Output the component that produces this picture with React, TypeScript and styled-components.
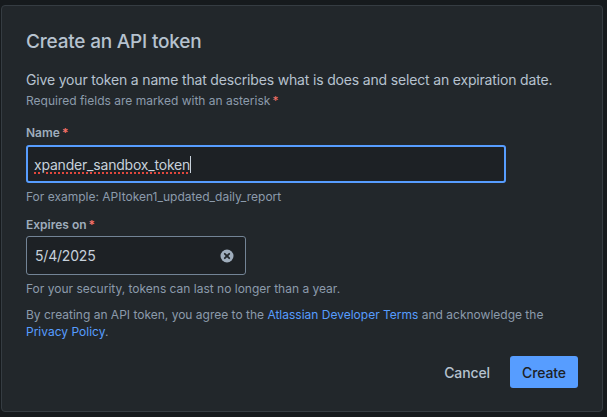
import React from "react";
import styled, { createGlobalStyle } from "styled-components";

const Global = createGlobalStyle`
  html, body { margin: 0; padding: 0; background: #161a1d; }
  body { font-family: Inter, "Noto Sans", "Liberation Sans", sans-serif; -webkit-font-smoothing: antialiased; }
  * { box-sizing: border-box; }
`;

const Page = styled.div`
  width: 607px;
  height: 417px;
  padding: 5px 4px 5px 1px;
  background: #161a1d;
`;

const Modal = styled.div`
  height: 407px;
  background: #22272b;
  border: 1px solid #353c42;
  border-radius: 4px;
  padding: 24px 24px 0 24px;
  display: flex;
  flex-direction: column;
  color: #b6c2cf;
  & > * { flex-shrink: 0; }
`;

const Title = styled.h1`
  margin: 0;
  font-size: 19px;
  line-height: 24px;
  font-weight: 500;
  letter-spacing: -0.2px;
  color: #b6c2cf;
`;

const Desc = styled.p`
  margin: 16px 0 0 0;
  font-size: 14px;
  line-height: 20px;
  letter-spacing: -0.17px;
  color: #b6c2cf;
`;

const Small = styled.p<{ $mt?: number }>`
  margin: ${(p) => p.$mt ?? 0}px 0 0 0;
  font-size: 12px;
  line-height: 16px;
  color: #8c9bab;
`;

const Star = styled.span`
  color: #f87168;
  margin-left: 2px;
`;

const Label = styled.label<{ $mt: number }>`
  display: block;
  margin-top: ${(p) => p.$mt}px;
  font-size: 12px;
  line-height: 16px;
  font-weight: 600;
  color: #9fadbc;
`;

const TextBox = styled.div<{ $w: number; $h: number; $mt: number; $focused?: boolean }>`
  margin-top: ${(p) => p.$mt}px;
  width: ${(p) => p.$w}px;
  height: ${(p) => p.$h}px;
  border-radius: 3px;
  border: ${(p) => (p.$focused ? "2px solid #579dff" : "1px solid #738496")};
  background: #1d2125;
  display: flex;
  align-items: center;
  padding: 0 ${(p) => (p.$focused ? 6 : 8)}px;
  font-size: 14px;
  letter-spacing: -0.2px;
  color: #c7d1db;
`;

const Typed = styled.span`
  text-decoration: underline dotted #e2483d;
  text-decoration-thickness: 2px;
  text-underline-offset: 3px;
`;

const Caret = styled.span`
  display: inline-block;
  width: 1px;
  height: 17px;
  background: #c7d1db;
`;

const ClearIcon = styled.svg`
  margin-left: auto;
  margin-right: 3px;
`;

const Link = styled.a`
  color: #579dff;
  text-decoration: none;
`;

const Legal = styled.p`
  margin: 9px 0 0 0;
  font-size: 12px;
  line-height: 17px;
  color: #8c9bab;
`;

const Footer = styled.div`
  display: flex;
  justify-content: flex-end;
  align-items: center;
  gap: 8px;
  margin-top: 16px;
`;

const Button = styled.button<{ $primary?: boolean }>`
  font-family: inherit;
  font-size: 14px;
  font-weight: 500;
  letter-spacing: -0.1px;
  height: 32px;
  padding: 0 12px;
  border: none;
  border-radius: 3px;
  background: ${(p) => (p.$primary ? "#579dff" : "transparent")};
  color: ${(p) => (p.$primary ? "#1d2125" : "#b6c2cf")};
`;

export default function App() {
  return (
    <Page>
      <Global />
      <Modal>
        <Title>Create an API token</Title>
        <Desc>Give your token a name that describes what is does and select an expiration date.</Desc>
        <Small $mt={3}>
          Required fields are marked with an asterisk<Star>*</Star>
        </Small>
        <Label $mt={16}>
          Name<Star>*</Star>
        </Label>
        <TextBox $w={480} $h={38} $mt={4} $focused>
          <Typed>xpander_sandbox_token</Typed>
          <Caret />
        </TextBox>
        <Small $mt={6}>For example: APItoken1_updated_daily_report</Small>
        <Label $mt={12}>
          Expires on<Star>*</Star>
        </Label>
        <TextBox $w={220} $h={39} $mt={3}>
          <span>5/4/2025</span>
          <ClearIcon width="14" height="14" viewBox="0 0 14 14">
            <circle cx="7" cy="7" r="6.5" fill="#9fadbc" />
            <path d="M4.8 4.8 L9.2 9.2 M9.2 4.8 L4.8 9.2" stroke="#22272b" strokeWidth="1.8" strokeLinecap="round" />
          </ClearIcon>
        </TextBox>
        <Small $mt={6}>For your security, tokens can last no longer than a year.</Small>
        <Legal>
          By creating an API token, you agree to the <Link>Atlassian Developer Terms</Link> and acknowledge the{" "}
          <Link>Privacy Policy</Link>.
        </Legal>
        <Footer>
          <Button>Cancel</Button>
          <Button $primary>Create</Button>
        </Footer>
      </Modal>
    </Page>
  );
}
